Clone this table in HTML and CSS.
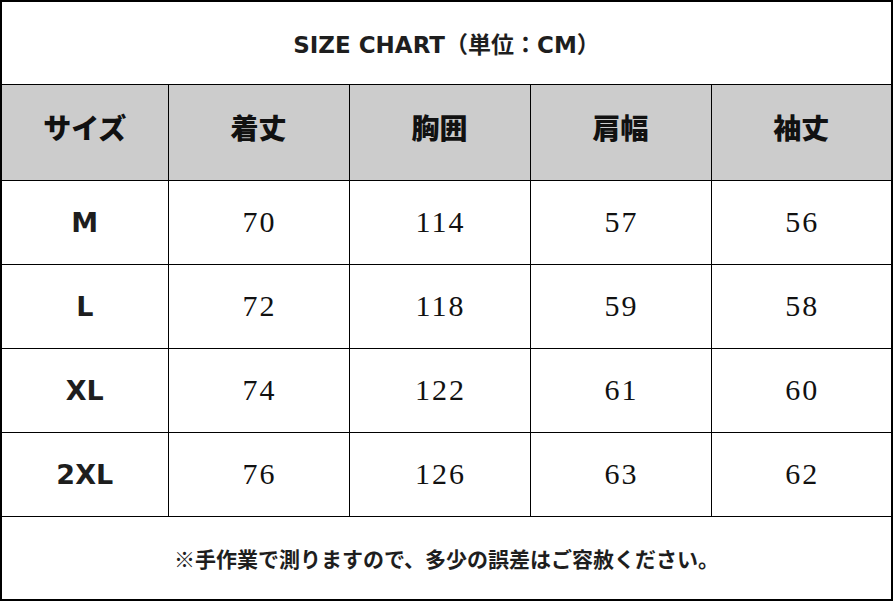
FILE: index.html
```html
<!DOCTYPE html>
<html lang="ja">
<head>
<meta charset="utf-8">
<title>SIZE CHART</title>
<link rel="stylesheet" href="styles.css">
</head>
<body>
<table class="chart">
  <colgroup>
    <col class="c-size">
    <col class="c-val">
    <col class="c-val">
    <col class="c-val">
    <col class="c-val">
  </colgroup>
  <tr class="r-title"><td colspan="5" class="title">SIZE CHART（単位：CM）</td></tr>
  <tr class="r-head">
    <th>サイズ</th><th>着丈</th><th>胸囲</th><th>肩幅</th><th>袖丈</th>
  </tr>
  <tr class="r-data"><td class="size">M</td><td class="num">70</td><td class="num">114</td><td class="num">57</td><td class="num">56</td></tr>
  <tr class="r-data"><td class="size">L</td><td class="num">72</td><td class="num">118</td><td class="num">59</td><td class="num">58</td></tr>
  <tr class="r-data"><td class="size">XL</td><td class="num">74</td><td class="num">122</td><td class="num">61</td><td class="num">60</td></tr>
  <tr class="r-data"><td class="size">2XL</td><td class="num">76</td><td class="num">126</td><td class="num">63</td><td class="num">62</td></tr>
  <tr class="r-foot"><td colspan="5" class="note">※手作業で測りますので、多少の誤差はご容赦ください。</td></tr>
</table>
</body>
</html>
```
FILE: styles.css
```css
html, body {
  margin: 0;
  padding: 0;
  background: #fff;
}
.chart {
  border-collapse: collapse;
  table-layout: fixed;
  width: 892px;
  border: 2px solid #000;
  color: #1e1e1e;
  font-family: "DejaVu Sans", "Noto Sans CJK JP", sans-serif;
}
.c-size { width: 167px; }
.c-val { width: 181px; }
.chart td, .chart th {
  border: 1px solid #000;
  text-align: center;
  vertical-align: middle;
  padding: 0;
}
.r-title { height: 83px; }
.r-head { height: 96px; }
.r-data { height: 84px; }
.r-foot { height: 84px; }
.title {
  font-size: 23px;
  font-weight: bold;
  padding-bottom: 12px;
}
.r-head th {
  background: #cccccc;
  font-family: "Noto Sans CJK JP", sans-serif;
  font-size: 28px;
  font-weight: 900;
  color: #111;
  padding-bottom: 10px;
}
.size {
  font-size: 27px;
  font-weight: bold;
  padding-bottom: 10px;
}
.num {
  font-family: "Liberation Serif", "DejaVu Serif", serif;
  font-size: 30px;
  letter-spacing: 2px;
  text-indent: 2px;
  color: #111;
  padding-top: 2px;
}
.note {
  font-family: "Noto Sans CJK JP", sans-serif;
  font-size: 21px;
  font-weight: bold;
  padding-bottom: 10px;
}
```
